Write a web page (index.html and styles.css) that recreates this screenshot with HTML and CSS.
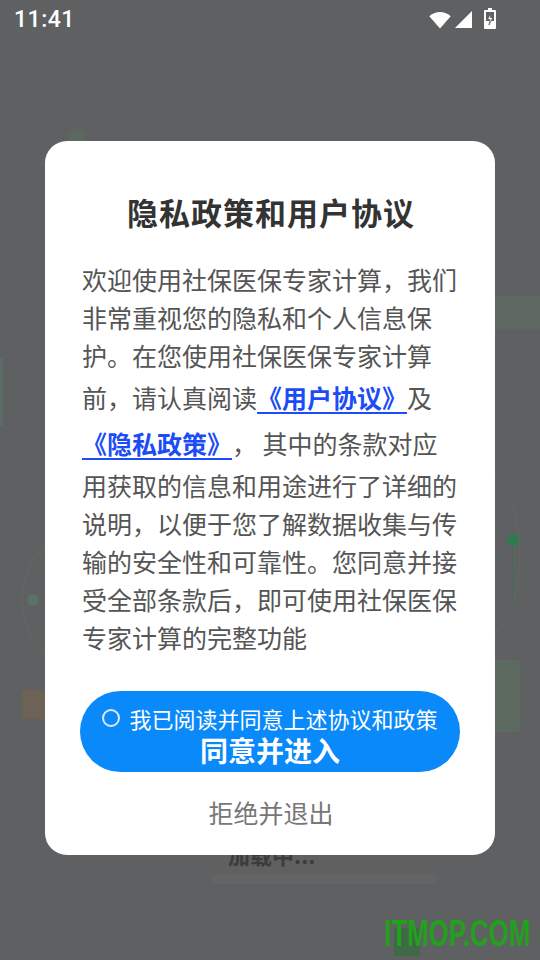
FILE: index.html
```html
<!DOCTYPE html>
<html lang="zh-CN">
<head>
  <meta charset="UTF-8">
  <title>隐私政策和用户协议</title>
  <link rel="stylesheet" href="styles.css">
</head>
<body>

<div class="screen">

  <!-- 背景（被遮罩的启动页） -->
  <div class="bg">
    <span class="bg-blob"></span>
    <span class="bg-strip"></span>
    <span class="bg-arc-left"></span>
    <span class="bg-dot-left"></span>
    <span class="bg-orange"></span>
    <span class="bg-green-top"></span>
    <span class="bg-arc-right"></span>
    <span class="bg-line-right"></span>
    <span class="bg-dot-right"></span>
    <span class="bg-green-right"></span>
    <span class="bg-loading">加载中...</span>
    <span class="bg-bar"></span>
    <span class="bg-green-bottom"></span>
  </div>

  <!-- 状态栏 -->
  <div class="status-bar">
    <span class="time">11:41</span>
    <div class="status-icons">
      <svg class="ic-wifi" width="22" height="18" viewBox="0 0 22 18">
        <path d="M11 17.5 L0.3 5.2 Q11 -3.2 21.7 5.2 Z" fill="#fff"/>
      </svg>
      <svg class="ic-signal" width="17" height="17" viewBox="0 0 17 17">
        <polygon points="0,17 17,17 17,0" fill="#fff"/>
      </svg>
      <svg class="ic-battery" width="12" height="21" viewBox="0 0 12 21">
        <rect x="4" y="0" width="4" height="2" fill="#fff"/>
        <rect x="0" y="2" width="12" height="19" rx="1" fill="#fff"/>
        <rect x="2" y="4" width="8" height="9" fill="#5f6061"/>
        <path d="M7 4.5 L3.5 11.5 L6 11.5 L5 17 L8.8 9.5 L6.3 9.5 Z" fill="#fff" stroke="#5f6061" stroke-width="0.8"/>
      </svg>
    </div>
  </div>

  <!-- 弹窗 -->
  <div class="dialog">
    <h1 class="dialog-title">隐私政策和用户协议</h1>
    <p class="dialog-text">欢迎使用社保医保专家计算，我们非常重视您的隐私和个人信息保护。在您使用社保医保专家计算前，请认真阅读<a href="javascript:;" class="link">《用户协议》</a>及<a href="javascript:;" class="link">《隐私政策》</a>， 其中的条款对应用获取的信息和用途进行了详细的说明，以便于您了解数据收集与传输的安全性和可靠性。您同意并接受全部条款后，即可使用社保医保专家计算的完整功能</p>

    <a href="javascript:;" class="btn-agree">
      <span class="agree-check">
        <span class="check-circle"></span>
        我已阅读并同意上述协议和政策
      </span>
      <span class="agree-main">同意并进入</span>
    </a>
    <a href="javascript:;" class="btn-refuse">拒绝并退出</a>
  </div>

  <div class="watermark">ITMOP.COM</div>
</div>

</body>
</html>
```

FILE: styles.css
```css
* {
  margin: 0;
  padding: 0;
  box-sizing: border-box;
}
body {
  background-color: #5f6061;
  font-family: "Noto Sans CJK SC", "Noto Sans", sans-serif;
}
.screen {
  width: 540px;
  height: 960px;
  position: relative;
  overflow: hidden;
  background-color: #5f6061;
}

/* 背景装饰 */
.bg span {
  position: absolute;
  display: block;
}
.bg-blob {
  left: 68px;
  top: 130px;
  width: 18px;
  height: 16px;
  border-radius: 6px;
  background-color: #5a6a5e;
  filter: blur(2px);
}
.bg-strip {
  left: 0;
  top: 358px;
  width: 3px;
  height: 68px;
  background-color: #5b6c64;
}
.bg-arc-left {
  left: 22px;
  top: 540px;
  width: 90px;
  height: 120px;
  border: 1px solid rgba(120, 140, 130, 0.18);
  border-radius: 50%;
}
.bg-dot-left {
  left: 27px;
  top: 594px;
  width: 12px;
  height: 12px;
  border-radius: 50%;
  background-color: #5b7066;
}
.bg-orange {
  left: 22px;
  top: 690px;
  width: 24px;
  height: 29px;
  border-radius: 3px;
  background-color: #6d6256;
}
.bg-green-top {
  left: 495px;
  top: 296px;
  width: 45px;
  height: 34px;
  background-color: #5d6862;
}
.bg-arc-right {
  left: 440px;
  top: 470px;
  width: 80px;
  height: 170px;
  border: 1px solid rgba(120, 140, 130, 0.16);
  border-radius: 50%;
}
.bg-line-right {
  left: 512px;
  top: 540px;
  width: 1px;
  height: 60px;
  background-color: #3d7052;
}
.bg-dot-right {
  left: 507px;
  top: 534px;
  width: 12px;
  height: 12px;
  border-radius: 50%;
  background-color: #2f7a4e;
}
.bg-green-right {
  left: 478px;
  top: 660px;
  width: 42px;
  height: 72px;
  border-radius: 3px;
  background-color: #5c6a60;
}
.bg-loading {
  left: 228px;
  top: 838px;
  font-size: 22px;
  font-weight: bold;
  color: #3c3c3c;
}
.bg-bar {
  left: 212px;
  top: 873px;
  width: 225px;
  height: 11px;
  border-radius: 6px;
  background-color: #646465;
}
.bg-green-bottom {
  left: 394px;
  top: 928px;
  width: 26px;
  height: 28px;
  background-color: #3f6a48;
}

/* 状态栏 */
.status-bar {
  position: relative;
  height: 38px;
  padding: 0 14px;
  display: flex;
  align-items: center;
  justify-content: space-between;
  color: #fff;
}
.time {
  font-family: Roboto, "Noto Sans", sans-serif;
  font-size: 23px;
  font-weight: 500;
  letter-spacing: 0.5px;
}
.status-icons {
  display: flex;
  align-items: center;
  padding-right: 30px;
}
.ic-wifi {
  margin-right: 4px;
  margin-top: 1px;
}
.ic-signal {
  margin-right: 12px;
}
.ic-battery {
  margin-top: -2px;
}

/* 弹窗 */
.dialog {
  position: relative;
  width: 450px;
  margin: 103px auto 0;
  padding: 51px 35px 23px 37px;
  background-color: #fff;
  border-radius: 22px;
  display: flex;
  flex-direction: column;
}
.dialog-title {
  font-size: 31px;
  line-height: 40px;
  font-weight: bold;
  color: #333;
  text-align: center;
  letter-spacing: 1px;
}
.dialog-text {
  margin-top: 28px;
  font-size: 25px;
  line-height: 38px;
  color: #555;
  text-align: left;
  text-spacing-trim: space-all;
}
.link {
  line-height: 46px;
  color: #1b4cf5;
  font-weight: bold;
  text-decoration: underline;
  text-decoration-thickness: 2px;
  text-underline-offset: 4px;
}
.btn-agree {
  margin: 35px 0 0 -2px;
  height: 81px;
  padding-top: 12px;
  border-radius: 41px;
  background-color: #0a89fb;
  color: #fff;
  text-decoration: none;
  display: flex;
  flex-direction: column;
  align-items: center;
}
.agree-check {
  display: flex;
  align-items: center;
  font-size: 22px;
  line-height: 30px;
}
.check-circle {
  width: 18px;
  height: 18px;
  margin-right: 9px;
  border: 2px solid #dfe9f5;
  border-radius: 50%;
}
.agree-main {
  font-size: 28px;
  line-height: 34px;
  font-weight: bold;
}
.btn-refuse {
  margin-top: 20px;
  font-size: 25px;
  line-height: 40px;
  color: #777;
  text-align: center;
  text-decoration: none;
}

.watermark {
  position: absolute;
  right: 10px;
  top: 912px;
  font-family: "Liberation Sans", Arial, sans-serif;
  font-size: 36px;
  font-weight: bold;
  line-height: 44px;
  color: #22a21c;
  transform: scaleX(0.72);
  transform-origin: right center;
}
```
